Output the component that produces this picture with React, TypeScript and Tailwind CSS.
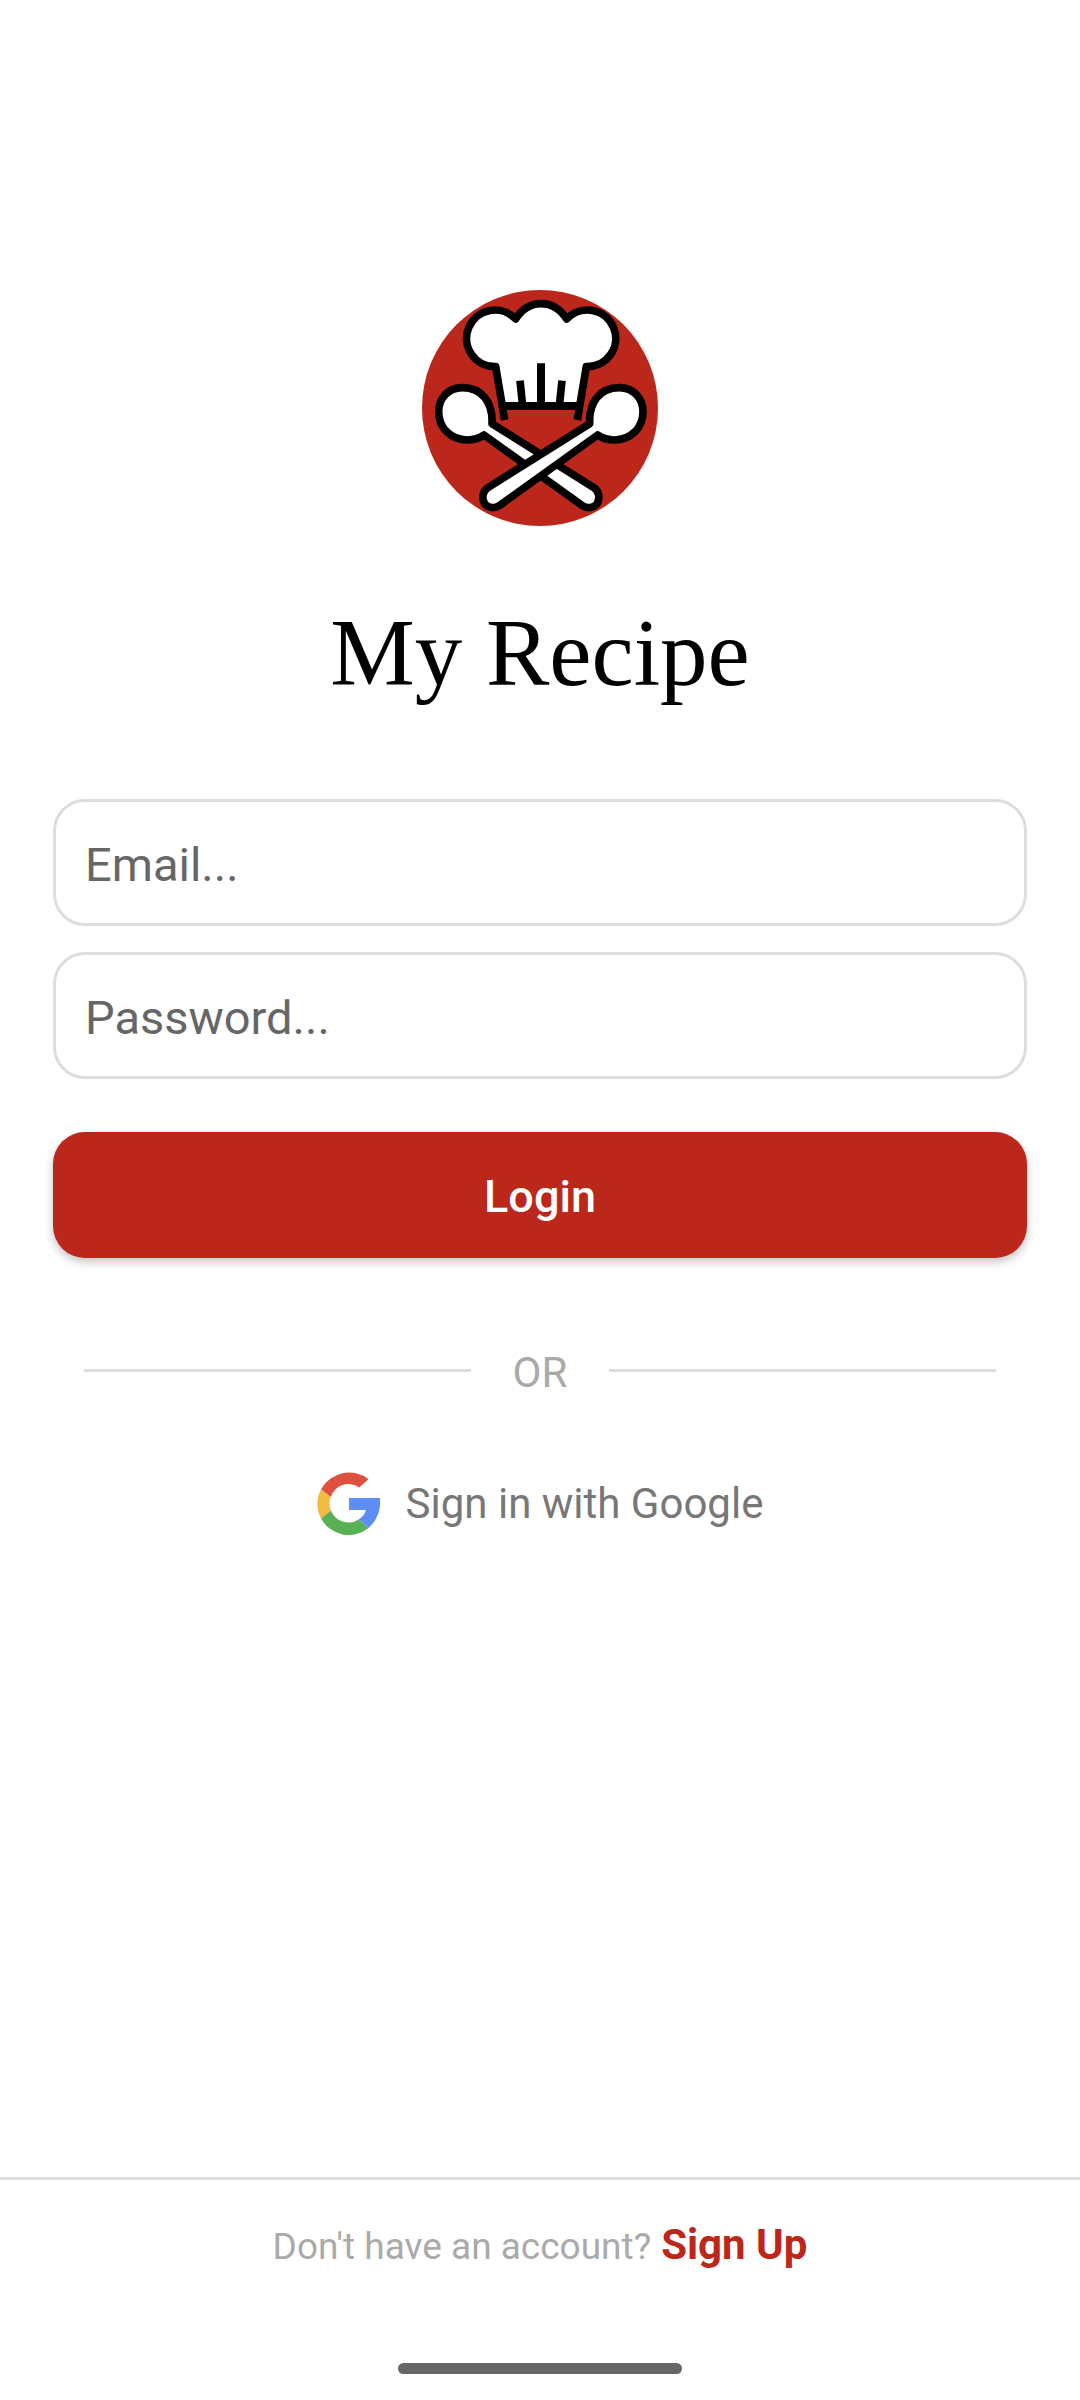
import React from "react";

const SPOON =
  "M246 431 C249 368 217 323 157 323 C113 323 86 357 86 395 C86 443 122 480 172 480 C190 480 207 475 222 465 L516 676 C532 687 552 684 561 671 C571 655 567 634 552 623 Z";

function Logo() {
  return (
    <svg
      viewBox="36 30 708 708"
      className="size-[236px]"
      role="img"
      aria-label="My Recipe logo"
      stroke="#000"
      strokeWidth="23"
      strokeLinejoin="round"
    >
      <circle cx="390" cy="384" r="354" fill="#bb271b" stroke="none" />
      <path
        d="M284 378 L257 260 A85 85 0 1 1 317 117 C338 84 364 71 393 71 C422 71 449 84 470 117 A85 85 0 1 1 529 260 L502 378 Z"
        fill="#fff"
        stroke="none"
      />
      <path
        d="M284 420 L257 260 A85 85 0 1 1 317 117 C338 84 364 71 393 71 C422 71 449 84 470 117 A85 85 0 1 1 529 260 L502 420"
        fill="none"
      />
      <path d="M278 378 H508 M393 250 V378" fill="none" strokeWidth="24" />
      <path d="M330 302 L338 378 M456 302 L448 378" fill="none" />
      <path d={SPOON} fill="#fff" />
      <path d={SPOON} fill="#fff" transform="translate(785 0) scale(-1 1)" />
    </svg>
  );
}

function GoogleIcon() {
  return (
    <svg viewBox="0 0 63 63" className="size-[63px]" aria-hidden="true">
      <path d="M4 17.5 A31.5 31.5 0 0 1 51.5 7.3 L42 15.5 A18.5 18.5 0 0 0 13.7 25 Z" fill="#de5141" />
      <path d="M4 17.5 A31.5 31.5 0 0 0 4 46.5 L14 38.5 A18.5 18.5 0 0 1 13.7 25 Z" fill="#f2bc42" />
      <path d="M4 46.5 A31.5 31.5 0 0 0 51.5 56 L41.5 47.5 A18.5 18.5 0 0 1 14 38.5 Z" fill="#58b155" />
      <path d="M32 26 H63 C64 38 60 48.5 51.5 56 L41.5 47.5 C45.5 45 48 42 49 38 H32 Z" fill="#5e8df5" />
    </svg>
  );
}

function Field({ label, type }: { label: string; type: string }) {
  return (
    <input
      type={type}
      aria-label={label}
      placeholder={`${label}...`}
      className="block h-[127px] w-full rounded-[32px] border-3 border-[#ddd] bg-white px-[29px] pt-[3px] text-[47px] text-black placeholder:text-[#666]"
    />
  );
}

export default function App() {
  return (
    <div className="flex min-h-screen flex-col bg-white font-[Roboto,sans-serif]">
      <main className="flex flex-1 flex-col items-center px-[53px] pt-[290px]">
        <Logo />
        <h1 className="mt-[71px] font-['Liberation_Serif',serif] text-[95px] leading-[112px] text-black">
          My Recipe
        </h1>
        <form className="mt-[90px] flex w-full flex-col" onSubmit={(e) => e.preventDefault()}>
          <div className="flex flex-col gap-[26px]">
            <Field label="Email" type="email" />
            <Field label="Password" type="password" />
          </div>
          <button
            type="submit"
            className="mt-[53px] h-[126px] w-full rounded-[32px] bg-[#bb271b] pt-[3px] text-[45px] font-medium text-white shadow-[0_4px_10px_rgba(0,0,0,0.24)]"
          >
            Login
          </button>
        </form>
        <div className="mt-[84px] flex w-full items-center px-[31px]">
          <div className="h-[3px] flex-1 bg-[#ddd]" />
          <span className="px-[42px] pt-[6px] text-[42px] leading-[50px] text-[#aaa]">OR</span>
          <div className="h-[3px] flex-1 bg-[#ddd]" />
        </div>
        <button type="button" className="mt-[74px] flex items-center gap-[26px] text-[42px] leading-[50px] text-[#777]">
          <GoogleIcon />
          Sign in with Google
        </button>
      </main>
      <footer className="flex h-[223px] flex-col items-center justify-between border-t-3 border-[#ddd] pt-[39px] pb-[26px]">
        <p className="flex items-baseline gap-[10px] text-[37px] text-[#aaa]">
          Don't have an account?
          <a href="#signup" className="text-[42px] leading-[50px] font-bold text-[#bb271b]">
            Sign Up
          </a>
        </p>
        <div className="h-[11px] w-[284px] rounded-full bg-[#666]" />
      </footer>
    </div>
  );
}
